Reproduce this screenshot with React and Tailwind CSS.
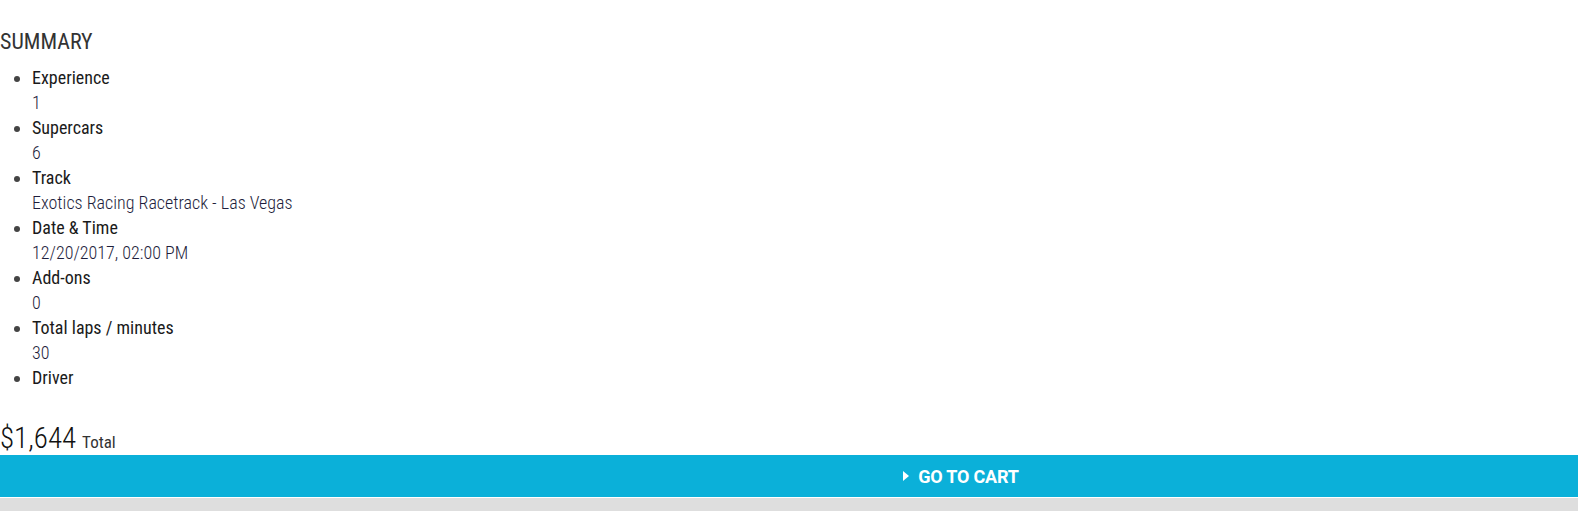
import React from 'react';

const ITEMS = [
  { label: 'Experience', value: '1' },
  { label: 'Supercars', value: '6' },
  { label: 'Track', value: 'Exotics Racing Racetrack - Las Vegas' },
  { label: 'Date & Time', value: '12/20/2017, 02:00 PM' },
  { label: 'Add-ons', value: '0' },
  { label: 'Total laps / minutes', value: '30' },
  { label: 'Driver', value: null },
];

const narrow = { fontFamily: 'Roboto, "Liberation Sans", sans-serif' };

export default function App() {
  return (
    <div className="min-h-screen bg-white flex flex-col" style={narrow}>
      {/* Summary */}
      <div className="pt-[30px] font-stretch-[80%]">
        <h2 className="text-[22px] leading-[24px] font-normal font-stretch-[86%] text-[#333] uppercase">Summary</h2>
        <ul className="list-disc pl-[32px] mt-[11px] text-[18px] leading-[25px]">
          {ITEMS.map(item => (
            <li key={item.label} className="marker:text-[#444]">
              <div className="font-normal text-[#1a1a1a]">{item.label}</div>
              {item.value && <div className="font-light text-[#1e1e3c]">{item.value}</div>}
            </li>
          ))}
        </ul>

        {/* Total */}
        <div className="mt-[36px] flex items-baseline gap-[6px] leading-[25px]">
          <span className="text-[29px] font-light text-[#111]">$1,644</span>
          <span className="text-[17px] font-normal text-[#333]">Total</span>
        </div>
      </div>

      {/* Go to cart */}
      <button className="h-[42px] w-full bg-[#0bb0d9] flex items-center justify-center pl-[344px] gap-[9px] text-white">
        <svg width="6" height="10" viewBox="0 0 6 10" aria-hidden="true">
          <path d="M0 0 L6 5 L0 10 Z" fill="white" />
        </svg>
        <span className="text-[18px] font-bold uppercase tracking-[-0.2px] font-stretch-normal">
          Go to cart
        </span>
      </button>
      <div className="mt-[1px] flex-1 bg-[#dedede]" />
    </div>
  );
}
